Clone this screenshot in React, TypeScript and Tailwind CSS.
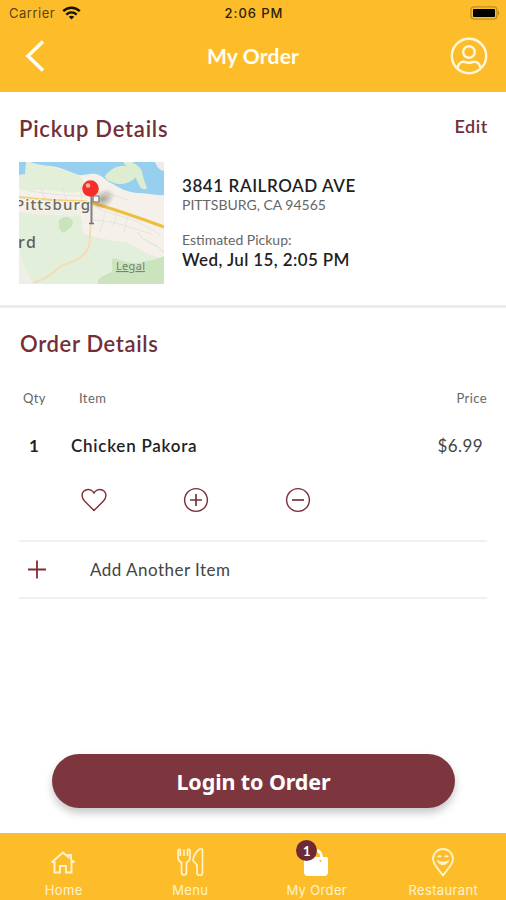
import type { ReactNode } from "react";

function StatusBar() {
	return (
		<div className="grid h-[26px] grid-cols-3 items-center pr-[6px] pl-[9px] font-['Inter'] text-[13px] leading-none text-[#2b2108]">
			<div className="flex items-center gap-[7px]">
				<span className="tracking-[0.5px] text-[#594514]">Carrier</span>
				<svg width="19" height="14" viewBox="0 0 19 14" fill="none" stroke="#17120a">
					<path d="M1.2 5.2c4.8-4.6 11.8-4.6 16.6 0" strokeWidth="2.5" />
					<path d="M4.3 8.6c3.1-2.9 7.3-2.9 10.4 0" strokeWidth="2.3" />
					<path d="M6.8 10.8 9.5 13.6l2.7-2.8c-1.5-1.3-3.9-1.3-5.4 0z" fill="#17120a" stroke="none" />
				</svg>
			</div>
			<span className="-ml-px text-center font-medium tracking-[0.95px] whitespace-nowrap">2:06 PM</span>
			<svg className="justify-self-end" width="30" height="14" viewBox="0 0 30 14">
				<rect x="0.9" y="0.9" width="26" height="12.2" rx="3" fill="none" stroke="#c08f1d" strokeWidth="1.4" />
				<rect x="3" y="3" width="22" height="8" rx="0.8" fill="#000" />
				<path d="M28 4.6c1.6.6 1.6 4.2 0 4.8z" fill="#b58619" />
			</svg>
		</div>
	);
}

function Header() {
	return (
		<header className="h-[92px] shrink-0 bg-[#fdbd2b]">
			<StatusBar />
			<div className="grid h-[60px] grid-cols-3 items-center pr-[18px] pl-[25px]">
				<svg width="20" height="32" viewBox="0 0 20 32" fill="none" stroke="#fffdf5" strokeWidth="3.6">
					<path d="M18 1.5 3 16l15 14.5" />
				</svg>
				<h1 className="-ml-[7px] text-center text-[21px] font-bold tracking-[0.2px] whitespace-nowrap text-[#fffdf5]">
					My Order
				</h1>
				<svg
					className="justify-self-end"
					width="38"
					height="38"
					viewBox="0 0 38 38"
					fill="none"
					stroke="#fff6dc"
					strokeWidth="2.4"
				>
					<circle cx="19" cy="19" r="17.2" />
					<circle cx="19" cy="15" r="5.8" />
					<path d="M7.5 31.5C8 27.5 10.5 24.8 13.5 24.8C15.5 24.8 16.5 25.8 19 25.8C21.5 25.8 22.5 24.8 24.5 24.8C27.5 24.8 30 27.5 30.5 31.5" />
				</svg>
			</div>
		</header>
	);
}

function PickupMap() {
	return (
		<svg width="145" height="122" viewBox="0 0 145 122" className="shrink-0">
			<defs>
				<radialGradient id="pin-shadow">
					<stop offset="0" stopColor="#6b6558" stopOpacity="0.55" />
					<stop offset="1" stopColor="#6b6558" stopOpacity="0" />
				</radialGradient>
			</defs>
			<rect width="145" height="122" fill="#f5f1ea" />
			<path d="M5 0h18c8 6 20 7 32 11 10 4 12 12 7 18-12 5-24-2-38-1-9 0-16 2-24-1V13l6-3z" fill="#e3efd8" />
			<path d="M0 0h7l-1 12-6 1z" fill="#97d0ee" />
			<path d="M11 0h134v33c-8 1-17-2-27-2-10-1-18-5-24-9-6-2-9-7-14-9-8-3-13 1-20 0-7-2-12-5-19-7-10-3-20-2-30-6z" fill="#97d0ee" />
			<path d="M86 14c5-7 14-11 20-10 7 2 13 6 11 11-6 7-17 9-24 5-4-1-7-3-7-6z" fill="#deedd2" />
			<path d="M104 0h9c3 2 9 5 10 10 1 6 3 10 5 16-2 2-4 1-6 0-3-4-4-8-6-12-3-4-9-9-12-14z" fill="#deedd2" />
			<path d="M136 0h9v9c-5-1-7-4-9-9z" fill="#efede6" />
			<path d="M0 50c15 3 38 1 58 2 8 3 2 13 8 20 16 5 28 7 40 8 12 4 22 14 39 17v25H0z" fill="#e2efda" />
			<path d="M9 43c14-2 28 1 40-1l14 6-8 6-46-2z" fill="#f1eee5" />
			<path d="M40 58c7-6 12-3 14 2 0 6-6 7-9 11-5-2-6-8-5-13z" fill="#c9e3bd" />
			<path d="M94 96c11 3 18 7 30 4 8-2 13-2 21-6v28H79c-2-6 7-9 12-11 5-3 0-10 3-15z" fill="#cbe4bd" />
			<path d="M0 82c2 12 5 26 15 40H0z" fill="#f0efe5" />
			<g fill="none" stroke="#e3e0d9" strokeWidth="0.8">
				<path d="M10 29c22 3 38 5 58 5M22 25l4 12M44 26l3 12M62 24v13M85 30l24 8M80 47c20 8 36 8 61 26M75 58c21 1 34 7 58 14M87 48l-6 22M98 50l-4 14M109 54l-4 16" />
				<path d="M118 70c6 8 10 9 16 12s6 5 11 8" stroke="#c9ddd6" />
			</g>
			<path d="M0 35c18 2 39 4 65 4l8 2" fill="none" stroke="#f4d07a" strokeWidth="2" />
			<path d="M73 41c22 6 45 14 72 24" fill="none" stroke="#eebf3f" strokeWidth="3.2" />
			<path d="M72 62c-3 16 2 22-8 31-9 9-17 7-25 13-7 7-9 9-25 15" fill="none" stroke="#f5dcb6" strokeWidth="2" />
			<ellipse cx="84" cy="37" rx="13" ry="9" fill="url(#pin-shadow)" transform="rotate(-32 84 37)" />
			<text x="-4" y="48" fontFamily="Noto Sans, sans-serif" fontSize="15" fontWeight="500" fill="#6a6862" stroke="#f7f3e8" strokeWidth="2" paintOrder="stroke" textLength="75">
				Pittsburg
			</text>
			<text x="-1" y="86" fontFamily="Noto Sans, sans-serif" fontSize="16" fontWeight="500" fill="#5f5f58" textLength="18">
				rd
			</text>
			<rect x="74" y="34" width="6" height="6" rx="1" fill="#f7f5f0" stroke="#777268" strokeWidth="1.2" />
			<path d="M72.5 34v27" stroke="#84817b" strokeWidth="2" />
			<path d="M70 61.5h5" stroke="#77746e" strokeWidth="1.5" />
			<circle cx="71.5" cy="26.5" r="8.3" fill="#f62d29" />
			<circle cx="69" cy="23.5" r="2.3" fill="#ffb0a3" />
			<text x="97" y="108" fontFamily="Noto Sans, sans-serif" fontSize="11" fill="#777f70" textDecoration="underline" textLength="29">
				Legal
			</text>
		</svg>
	);
}

function PickupDetails() {
	return (
		<section className="h-[213px] pt-[21px] pr-[18px] pl-[19px]">
			<div className="flex h-[30px] items-center justify-between font-semibold text-[#732f38]">
				<h2 className="text-[22px] tracking-[0.75px]">Pickup Details</h2>
				<a className="mb-[3px] text-[18px] tracking-[0.6px]">Edit</a>
			</div>
			<div className="mt-[19px] flex gap-[18px] whitespace-nowrap">
				<PickupMap />
				<div className="flex flex-col pt-[13px]">
					<p className="text-[17px] leading-[21px] font-semibold tracking-[0.57px] text-[#1f1f1f]">3841 RAILROAD AVE</p>
					<p className="text-[14px] leading-[18px] text-[#666]">PITTSBURG, CA 94565</p>
					<p className="mt-[17px] text-[14px] leading-[18px] text-[#666]">Estimated Pickup:</p>
					<p className="text-[17px] leading-[21px] font-semibold tracking-[0.38px] text-[#1f1f1f]">Wed, Jul 15, 2:05 PM</p>
				</div>
			</div>
		</section>
	);
}

function ItemActions() {
	return (
		<div className="flex h-[26px] items-center gap-[76px] pl-[62px] text-[#7a3039]">
			<svg width="26" height="26" viewBox="0 0 26 26" fill="none" stroke="currentColor" strokeWidth="1.4">
				<path d="M13 23.5 3.5 14C.4 10.8.5 6.5 2.7 4.3 5.5 1.6 9.7 2 12 4.6L13 6l1-1.4c2.3-2.6 6.5-3 9.3-.3 2.2 2.2 2.3 6.5-.8 9.7z" />
			</svg>
			<svg width="26" height="26" viewBox="0 0 26 26" fill="none" stroke="currentColor">
				<circle cx="13" cy="13" r="11.4" strokeWidth="1.4" />
				<path d="M7 13h12M13 7v12" strokeWidth="1.7" />
			</svg>
			<svg width="26" height="26" viewBox="0 0 26 26" fill="none" stroke="currentColor">
				<circle cx="13" cy="13" r="11.4" strokeWidth="1.4" />
				<path d="M7 13h12" strokeWidth="1.7" />
			</svg>
		</div>
	);
}

function OrderDetails() {
	return (
		<section className="px-[19px] pt-[21px]">
			<h2 className="h-[30px] pl-px text-[22px] leading-[30px] font-semibold tracking-[0.65px] text-[#732f38]">
				Order Details
			</h2>
			<div className="mt-[31px] flex h-[18px] items-center text-[13px] tracking-[0.4px] text-[#666]">
				<span className="w-[60px] pl-1">Qty</span>
				<span className="flex-1">Item</span>
				<span>Price</span>
			</div>
			<div className="mt-[26px] flex h-[24px] items-center pr-[4px] text-[17px]">
				<span className="w-[52px] pl-[10px] font-bold text-[#222]">1</span>
				<span className="flex-1 font-semibold tracking-[0.75px] text-[#222]">Chicken Pakora</span>
				<span className="tracking-[0.4px] text-[#444]">$6.99</span>
			</div>
			<div className="pt-[29px] pb-[27px]">
				<ItemActions />
			</div>
			<div className="flex h-[59px] items-center border-y-2 border-[#f0f0f0] pl-[8px]">
				<svg width="20" height="20" viewBox="0 0 20 20" stroke="#842b36" strokeWidth="1.8">
					<path d="M1 9.5h18M10 .5v18" />
				</svg>
				<span className="pl-[43px] text-[17px] tracking-[0.48px] text-[#444]">Add Another Item</span>
			</div>
		</section>
	);
}

function NavItem({ label, children }: { label: string; children: ReactNode }) {
	return (
		<a className="flex flex-1 flex-col items-center text-[13px] leading-[16px] text-[#fff3cc]">
			<span className="flex h-[30px] items-end">{children}</span>
			<span className="mt-[5px] pl-px font-['Inter'] tracking-[0.35px]">{label}</span>
		</a>
	);
}

function BottomNav() {
	return (
		<nav className="flex h-[67px] shrink-0 bg-[#fdbd2b] pt-[14px]">
			<NavItem label="Home">
				<svg className="mb-[3px]" width="26" height="24" viewBox="0 0 26 24" fill="none" stroke="#fff3cc" strokeWidth="1.9">
					<path d="M1.5 12.5 13 2.5 18.5 7V5H21v4.5l3.5 3M4.500 11v11.500H10V16h6v6.500h5.500V11" />
				</svg>
			</NavItem>
			<NavItem label="Menu">
				<svg width="28" height="30" viewBox="0 0 28 30" fill="none" stroke="#fff3cc" strokeWidth="1.7" strokeLinejoin="round">
					<path d="M2 3v7.500c0 2.500 1.500 4 3.500 5V25c0 4 5 4 5 0v-9.500c2-1 3.500-2.500 3.500-5V3c-1-1-2-1-2.500 0v6M2 3c.8-1 1.700-1 2.300 0v6M8 2.500V9" />
					<path d="M26.500 3v23c0 3-5.500 3-5.500 0v-8l-4-4.500C17.500 9 20.500 4.500 23 2.500c1.300-1 3.300-.8 3.500.5z" />
				</svg>
			</NavItem>
			<NavItem label="My Order">
				<span className="relative">
					<svg width="26" height="29" viewBox="0 0 26 29" fill="#fff">
						<path d="M1 10.500a1.500 1.500 0 0 1 1.500-1.500h21a1.500 1.500 0 0 1 1.500 1.500V24a4 4 0 0 1-4 4H5a4 4 0 0 1-4-4z" />
						<path d="M7 12V8.500c0-8 11.500-8 11.500 0V12" fill="none" stroke="#fff" strokeWidth="2.8" />
						<circle cx="17.5" cy="12.8" r="1.1" fill="#fdbd2b" />
					</svg>
					<span className="absolute -top-[8px] -left-[7px] flex size-[21px] items-center justify-center rounded-full bg-[#6d2a34] text-[13px] font-bold text-white">
						1
					</span>
				</span>
			</NavItem>
			<NavItem label="Restaurant">
				<svg width="24" height="30" viewBox="0 0 24 30" fill="none" stroke="#fff3cc" strokeWidth="1.8" strokeLinejoin="round">
					<path d="M12 28.500C8.500 23 2 18 2 12a10 10 0 0 1 20 0C22 18 15.500 23 12 28.500z" />
					<path d="M6.500 13.500c1 5.500 10 5.500 11 0-3 2-8 2-11 0z" fill="#fff3cc" strokeWidth="1" />
					<path d="M7 10c.8-1.300 2.200-1.300 3 0M14 10c.8-1.300 2.200-1.300 3 0" />
				</svg>
			</NavItem>
		</nav>
	);
}

export default function App() {
	return (
		<div className="flex h-[900px] w-[506px] flex-col overflow-hidden bg-white font-['Lato',sans-serif]">
			<Header />
			<main className="flex flex-1 flex-col">
				<PickupDetails />
				<div className="h-[3px] bg-[#ededed]" />
				<OrderDetails />
				<button className="mt-auto mr-[51px] mb-[25px] ml-[52px] h-[54px] rounded-full bg-[#7d363e] pt-[2px] font-['Noto_Sans'] text-[21.5px] font-bold tracking-[-0.1px] text-white shadow-[0_5px_9px_rgba(0,0,0,0.22)]">
					Login to Order
				</button>
			</main>
			<BottomNav />
		</div>
	);
}
